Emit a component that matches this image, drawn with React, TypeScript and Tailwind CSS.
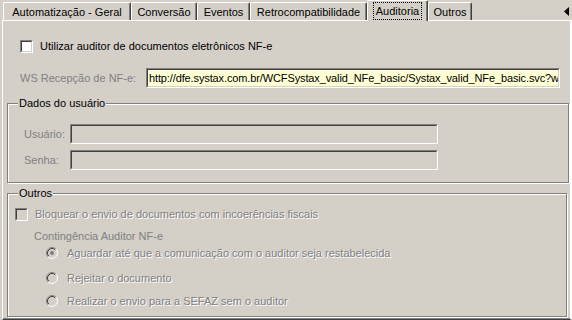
import React from 'react';

const TABS = [
    { label: 'Automatização - Geral', w: 'w-[128px]' },
    { label: 'Conversão', w: 'w-[66px]' },
    { label: 'Eventos', w: 'w-[53px]' },
    { label: 'Retrocompatibilidade', w: 'w-[117px]' },
    { label: 'Auditoria', w: 'w-[61px]', active: true },
    { label: 'Outros', w: 'w-[44px]' },
];

const Sunken: React.FC<{ className?: string; fill?: string; children?: React.ReactNode }> = ({ className = '', fill = 'bg-[#d4d0c8]', children }) => (
    <div className={`border border-t-[#808080] border-l-[#808080] border-b-white border-r-white ${className}`}>
        <div className={`h-full w-full border border-t-[#404040] border-l-[#404040] border-b-[#d4d0c8] border-r-[#d4d0c8] overflow-hidden ${fill}`}>
            {children}
        </div>
    </div>
);

const Radio: React.FC<{ checked?: boolean }> = ({ checked }) => (
    <svg width="12" height="12" viewBox="0 0 12 12" className="shrink-0">
        <circle cx="6" cy="6" r="5" fill="#d4d0c8" />
        <path d="M9.89 2.11 A5.5 5.5 0 0 0 2.11 9.89" stroke="#808080" fill="none" />
        <path d="M9.18 2.82 A4.5 4.5 0 0 0 2.82 9.18" stroke="#404040" fill="none" />
        <path d="M9.89 2.11 A5.5 5.5 0 0 1 2.11 9.89" stroke="#ffffff" fill="none" />
        {checked && <circle cx="6" cy="6" r="2" fill="#808080" />}
    </svg>
);

const Group: React.FC<{ title: string; className: string; children: React.ReactNode }> = ({ title, className, children }) => (
    <div className={`relative border border-[#808080] shadow-[1px_1px_0_#fff,inset_1px_1px_0_#fff] ${className}`}>
        <span className="absolute left-[10px] -top-[7px] px-[1px] leading-[13px] bg-[#d4d0c8] text-black">
            {title}
        </span>
        {children}
    </div>
);

const Embossed: React.FC<{ children: React.ReactNode }> = ({ children }) => (
    <span className="text-[#808080] [text-shadow:1px_1px_0_#fff] whitespace-nowrap">{children}</span>
);

export default function App() {
    return (
        <div className="w-[572px] h-[320px] bg-[#d4d0c8] pl-[2px] flex flex-col text-[11px] text-black font-['Liberation_Sans',Arial,sans-serif] overflow-hidden">
            {/* tab strip */}
            <div className="relative z-10 h-[20px] flex items-end shrink-0">
                <div className="w-px" />
                {TABS.map(t =>
                    t.active ? (
                        <div key={t.label} className={`${t.w} h-[21px] -mb-px bg-[#d4d0c8] border-t border-l border-white border-r border-r-[#404040] shadow-[inset_-1px_0_0_#808080] rounded-t-[2px] flex justify-center pt-[1px]`}>
                            <span className="h-[18px] px-[2px] flex items-center border border-dotted border-black leading-none">
                                {t.label}
                            </span>
                        </div>
                    ) : (
                        <div key={t.label} className={`${t.w} h-[18px] border-t border-l border-white border-r border-r-[#404040] shadow-[inset_-1px_0_0_#808080] rounded-t-[2px] flex items-center justify-center pt-[2px] whitespace-nowrap`}>
                            {t.label}
                        </div>
                    )
                )}
                <div className="ml-auto self-start mt-[7px] mr-[3px]">
                    <svg width="5" height="9" viewBox="0 0 5 9">
                        <polygon points="5,0 5,9 0,4.5" fill="#000" />
                    </svg>
                </div>
            </div>

            {/* page */}
            <div className="flex-1 w-[570px] border-l border-t border-r-2 border-white border-b border-b-[#404040] shadow-[inset_0_-1px_0_#808080]">
                <div className="mt-[19px] ml-[17px] h-[13px] flex items-center gap-[7px]">
                    <Sunken className="w-[13px] h-[13px]" fill="bg-white" />
                    <span className="whitespace-nowrap">Utilizar auditor de documentos eletrônicos NF-e</span>
                </div>

                <div className="mt-[15px] ml-[17px] h-[20px] flex items-center">
                    <span className="w-[126px] text-[#808080] whitespace-nowrap">WS Recepção de NF-e:</span>
                    <Sunken className="w-[414px] h-[20px]" fill="bg-[#ffffd6]">
                        <div className="pl-[1px] leading-[16px] whitespace-nowrap tracking-[-0.12px]">
                            http://dfe.systax.com.br/WCFSystax_valid_NFe_basic/Systax_valid_NFe_basic.svc?w
                        </div>
                    </Sunken>
                </div>

                <Group title="Dados do usuário" className="mt-[15px] ml-[4px] w-[562px] h-[80px]">
                    <div className="pt-[20px] pl-[16px]">
                        <div className="h-[20px] flex items-center">
                            <span className="w-[46px] text-[#808080]">Usuário:</span>
                            <Sunken className="w-[368px] h-[20px]" />
                        </div>
                        <div className="mt-[6px] h-[20px] flex items-center">
                            <span className="w-[46px] text-[#808080]">Senha:</span>
                            <Sunken className="w-[368px] h-[20px]" />
                        </div>
                    </div>
                </Group>

                <Group title="Outros" className="mt-[10px] ml-[4px] w-[560px] h-[124px]">
                    <div className="mt-[14px] pl-[7px] h-[13px] flex items-center gap-[7px]">
                        <Sunken className="w-[13px] h-[13px]" />
                        <Embossed>Bloquear o envio de documentos com incoerências fiscais</Embossed>
                    </div>
                    <div className="mt-[8px] pl-[26px] h-[14px] flex items-center text-[#808080]">
                        Contingência Auditor NF-e
                    </div>
                    <div className="mt-[3px] pl-[38px] h-[14px] flex items-center gap-[9px]">
                        <Radio checked />
                        <Embossed>Aguardar até que a comunicação com o auditor seja restabelecida</Embossed>
                    </div>
                    <div className="mt-[11px] pl-[38px] h-[14px] flex items-center gap-[9px]">
                        <Radio />
                        <Embossed>Rejeitar o documento</Embossed>
                    </div>
                    <div className="mt-[9px] pl-[38px] h-[14px] flex items-center gap-[9px]">
                        <Radio />
                        <Embossed>Realizar o envio para a SEFAZ sem o auditor</Embossed>
                    </div>
                </Group>
            </div>
        </div>
    );
}
